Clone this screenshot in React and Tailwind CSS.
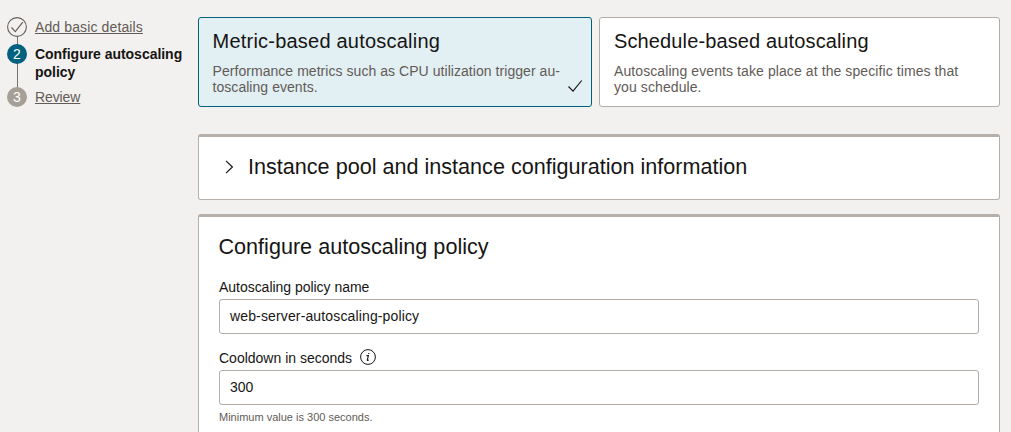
import React from "react";

function Steps() {
  return (
    <nav className="relative w-[198px] shrink-0 pl-[7px] pt-[17px] text-[14px] leading-[18px]">
      <div className="absolute left-[17px] top-[30px] h-[60px] w-px bg-[#77716c]" />
      <ol className="relative">
        <li className="flex h-[28px] gap-2">
          <svg className="size-5 shrink-0" viewBox="0 0 20 20" fill="none" stroke="#66605c">
            <circle cx="10" cy="10" r="9.4" fill="#f3f1ef" strokeWidth="1.1" />
            <path d="M4.5 10.5 8.3 14.6 15.8 5.2" strokeWidth="1.2" />
          </svg>
          <a className="pt-[1px] tracking-[0.12px] text-[#625b57] underline underline-offset-1">Add basic details</a>
        </li>
        <li className="flex h-[43px] gap-2">
          <span className="mt-[-1px] flex size-5 shrink-0 items-center justify-center rounded-full bg-[#00617f] text-white">2</span>
          <span className="whitespace-nowrap font-bold tracking-[-0.03px] text-[#161513]">Configure autoscaling<br />policy</span>
        </li>
        <li className="flex gap-2">
          <span className="mt-[-1px] flex size-5 shrink-0 items-center justify-center rounded-full bg-[#a69f98] text-white">3</span>
          <a className="tracking-[-0.1px] text-[#625b57] underline underline-offset-1">Review</a>
        </li>
      </ol>
    </nav>
  );
}

function Card({ className, title, lines, selected }) {
  return (
    <section className={`relative h-[90px] rounded-[3px] border pt-[10px] whitespace-nowrap ${className}`}>
      <h2 className="text-[20px] leading-[26px] text-[#161513]">{title}</h2>
      <p className="mt-[9px] text-[14px] leading-[16px] tracking-[0.05px] text-[#625b57]">
        {lines[0]}<br />{lines[1]}
      </p>
      {selected && (
        <svg className="absolute bottom-[13px] right-[8px] h-[14px] w-[16px]" viewBox="0 0 16 14" fill="none" stroke="#161513" strokeWidth="1.15">
          <path d="M1.5 7.5 6 12.2 14.7 1.5" />
        </svg>
      )}
    </section>
  );
}

export default function App() {
  return (
    <div className="flex h-[432px] w-[1011px] overflow-hidden bg-[#f3f1ef] font-['Liberation_Sans',Arial,sans-serif] text-[#161513]">
      <Steps />
      <main className="w-[802px] pt-[17px]">
        <div className="flex gap-[7px]">
          <Card className="w-[394px] border-[#00617f] bg-[#e2eff3] pl-[13.5px] [&>h2]:tracking-[0.22px]" title="Metric-based autoscaling" lines={["Performance metrics such as CPU utilization trigger au-", "toscaling events."]} selected />
          <Card className="w-[401px] border-[#b3aca7] bg-white pl-[14px] [&>h2]:tracking-[0.13px] [&>p]:tracking-[0.09px]" title="Schedule-based autoscaling" lines={["Autoscaling events take place at the specific times that", "you schedule."]} />
        </div>
        <section className="mt-[27px] flex h-[66px] items-center rounded-[3px] border border-t-[3px] border-[#b5aea9] bg-white pb-[2px] pl-[26px]">
          <svg className="h-[14px] w-[9px] shrink-0" viewBox="0 0 9 14" fill="none" stroke="#161513" strokeWidth="1.2">
            <path d="M1 .9 7.4 7 1 13.1" />
          </svg>
          <h2 className="ml-[14px] whitespace-nowrap text-[21.6px] leading-[26px]">Instance pool and instance configuration information</h2>
        </section>
        <section className="mt-[14px] h-[240px] rounded-[3px] border border-t-[3px] border-[#b5aea9] bg-white px-[20px] pt-[17px]">
          <h2 className="-ml-[0.5px] text-[21.6px] leading-[26px]">Configure autoscaling policy</h2>
          <label className="mt-[18px] block text-[14px] leading-[18px] tracking-[-0.03px]">Autoscaling policy name</label>
          <div className="mt-[3px] flex h-[35px] items-center rounded-[3px] border border-[#b3aca7] pl-[10px] text-[14px] tracking-[0.14px]">web-server-autoscaling-policy</div>
          <label className="mt-[15px] flex h-[18px] items-center text-[14px] leading-[18px]">
            Cooldown in seconds
            <svg className="mb-[2px] ml-2 size-4" viewBox="0 0 16 16" fill="none">
              <circle cx="8" cy="8" r="7.4" stroke="#161513" strokeWidth="1" />
              <path d="M6.5 6.6h1.9L7.3 11.2q-.1.7 1.4-.3M8.7 3.9v1.2" stroke="#161513" strokeWidth="1.1" />
            </svg>
          </label>
          <div className="mt-[3px] flex h-[35px] items-center rounded-[3px] border border-[#b3aca7] pl-[10px] text-[14px]">300</div>
          <p className="mt-[5px] text-[11px] leading-[14px] text-[#625b57]">Minimum value is 300 seconds.</p>
        </section>
      </main>
    </div>
  );
}
